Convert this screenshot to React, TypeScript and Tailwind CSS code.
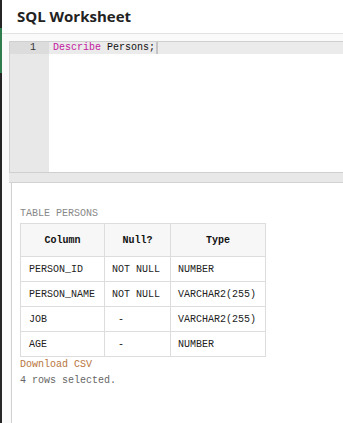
const rows = [
  { name: 'PERSON_ID', nul: 'NOT NULL', type: 'NUMBER' },
  { name: 'PERSON_NAME', nul: 'NOT NULL', type: 'VARCHAR2(255)' },
  { name: 'JOB', nul: '\u00a0-', type: 'VARCHAR2(255)' },
  { name: 'AGE', nul: '\u00a0-', type: 'NUMBER' },
]

const mono = "font-['Liberation_Mono',monospace] text-[10px]"

export default function App() {
  return (
    <div className="flex h-[423px] w-[343px] overflow-hidden bg-white">
      {/* left edge of the sidebar */}
      <div className="flex w-[2px] shrink-0 flex-col bg-[#262626]">
        <div className="h-[28px]" />
        <div className="h-[45px] bg-[#2f7d4e]" />
      </div>

      <div className="flex min-w-0 flex-1 flex-col">
        <div className="flex h-[34px] shrink-0 items-center border-b border-[#e2e2e2] pl-[15px]">
          <h1 className="font-['Open_Sans',sans-serif] text-[15px] font-bold text-[#222]">SQL Worksheet</h1>
        </div>

        <div className="flex flex-1 flex-col bg-[#fafafa] pl-[7px] pt-[7px]">
          {/* editor */}
          <div className="flex h-[132px] shrink-0 flex-col border border-r-0 border-[#cfcfcf] bg-white">
            <div className="flex h-[12px] bg-[#ebebeb]">
              <div className={`w-[39px] shrink-0 bg-[#dcdcdc] pr-[13px] text-right leading-[12px] text-[#333] ${mono}`}>1</div>
              <div className={`flex pl-[4px] leading-[12px] ${mono}`}>
                <span className="text-[#c2189e]">Describe</span>
                <span className="text-[#111]">&nbsp;Persons;</span>
                <span className="ml-[1px] h-[12px] w-[2px] bg-[#c4c4c4]" />
              </div>
            </div>
            <div className="flex flex-1">
              <div className="w-[39px] shrink-0 bg-[#e8e8e8]" />
              <div className="flex-1" />
            </div>
          </div>

          {/* splitter */}
          <div className="h-[10px] shrink-0 border-b border-[#d2d2d2] bg-[#e8e8e8]" />

          {/* results */}
          <div className={`ml-[2px] flex-1 border-l border-[#d2d2d2] bg-white pl-[8px] pt-[23px] ${mono}`}>
            <div className="leading-[16px] text-[#888]">TABLE PERSONS</div>
            <table className="mt-[1px] border-collapse">
              <thead>
                <tr className="h-[33px] bg-[#f7f7f7]">
                  <th className="w-[84px] border border-[#dddddd] font-bold text-[#111]">Column</th>
                  <th className="w-[66px] border border-[#dddddd] font-bold text-[#111]">Null?</th>
                  <th className="w-[95px] border border-[#dddddd] font-bold text-[#111]">Type</th>
                </tr>
              </thead>
              <tbody>
                {rows.map((r) => (
                  <tr key={r.name} className="h-[25px] text-[#222]">
                    <td className="border border-[#dddddd] pl-[8px]">{r.name}</td>
                    <td className="border border-[#dddddd] pl-[7px]">{r.nul}</td>
                    <td className="border border-[#dddddd] pl-[7px]">{r.type}</td>
                  </tr>
                ))}
              </tbody>
            </table>
            <div className="leading-[16px] text-[#b8743c]">Download CSV</div>
            <div className="leading-[16px] text-[#666]">4 rows selected.</div>
          </div>
        </div>
      </div>
    </div>
  )
}
